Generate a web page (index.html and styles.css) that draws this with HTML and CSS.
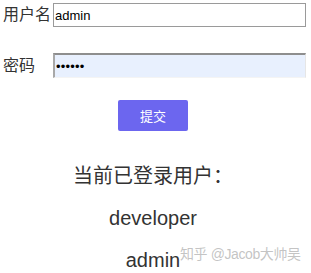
FILE: index.html
```html
<!DOCTYPE html>
<html lang="zh-CN">
<head>
<meta charset="utf-8">
<link rel="stylesheet" href="styles.css">
</head>
<body>
<div class="page">
  <form class="form">
    <div class="row">
      <label class="label">用户名</label>
      <input class="field field-user" type="text" value="admin">
    </div>
    <div class="row row-pass">
      <label class="label">密码</label>
      <input class="field field-pass" type="password" value="123456">
    </div>
    <div class="actions">
      <button class="submit" type="button">提交</button>
    </div>
  </form>
  <div class="users">
    <p class="line">当前已登录用户：</p>
    <p class="line">developer</p>
    <p class="line">admin</p>
  </div>
  <div class="watermark">知乎 @Jacob大帅吴</div>
</div>
</body>
</html>
```
FILE: styles.css
```css
html, body {
  margin: 0;
  padding: 0;
  background: #fff;
}
.page {
  position: relative;
  width: 311px;
  height: 273px;
  overflow: hidden;
  font-family: "Liberation Sans", "Noto Sans CJK SC", sans-serif;
  color: #333;
}
.form {
  padding: 3px 0 0 3px;
  display: flex;
  flex-direction: column;
}
.row {
  display: grid;
  grid-template-columns: 50px 253px;
  align-items: center;
  height: 24px;
}
.row-pass {
  margin-top: 26px;
}
.label {
  font-size: 16px;
  color: #333;
  line-height: 24px;
  white-space: nowrap;
}
.field {
  box-sizing: border-box;
  height: 24px;
  margin: 0;
  padding: 0 1px;
  font-family: "Liberation Sans", sans-serif;
  font-size: 13px;
  color: #000;
  outline: none;
}
.field-user {
  border: 1px solid #9a9a9a;
  background: #fff;
}
.field-pass {
  height: 25px;
  border-style: solid;
  border-width: 2px 1px 1px 2px;
  border-color: #8e8e8e #e6e6e6 #f4f4f4 #a8a8a8;
  background: #e8f0fe;
  font-size: 13px;
  letter-spacing: 0.2px;
}
.actions {
  margin-top: 23px;
  padding-left: 115px;
}
.submit {
  width: 70px;
  height: 31px;
  border: none;
  border-radius: 2px;
  background: #6c66ef;
  color: #fff;
  font-family: "Noto Sans CJK SC", sans-serif;
  font-size: 13px;
  padding: 0;
}
.users {
  margin-top: 24px;
  width: 306px;
  text-align: center;
}
.line {
  margin: 0;
  font-size: 20px;
  line-height: 42px;
  color: #333;
}
.watermark {
  position: absolute;
  left: 180px;
  top: 245px;
  font-size: 14px;
  line-height: 18px;
  color: rgba(170, 170, 170, 0.7);
  white-space: nowrap;
  letter-spacing: -0.4px;
}
```
